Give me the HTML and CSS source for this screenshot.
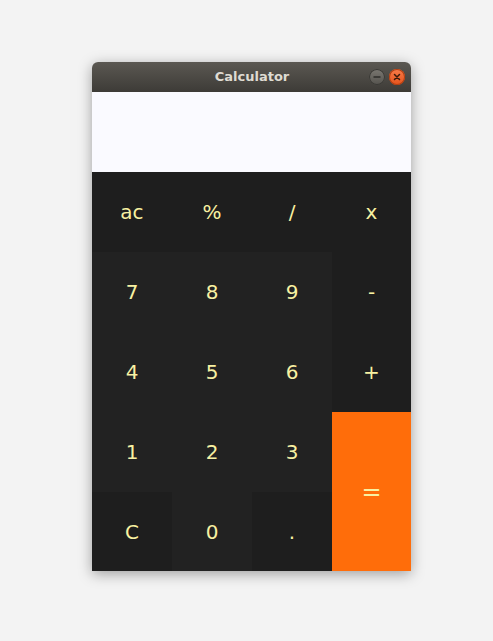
FILE: index.html
```html
<!DOCTYPE html>
<html>
<head>
<meta charset="utf-8">
<link rel="stylesheet" href="styles.css">
</head>
<body>
<div class="window">
  <div class="titlebar">
    <span class="title">Calculator</span>
    <div class="controls">
      <span class="ctl min"><svg width="16" height="16" viewBox="0 0 16 16"><line x1="4.5" y1="8" x2="11.5" y2="8" stroke="#2e2d2a" stroke-width="1.4"/></svg></span>
      <span class="ctl close"><svg width="16" height="16" viewBox="0 0 16 16"><path d="M5.5 5.5 L10.5 10.5 M10.5 5.5 L5.5 10.5" stroke="#3a1a0a" stroke-width="1.5" stroke-linecap="round"/></svg></span>
    </div>
  </div>
  <div class="display"></div>
  <div class="keys">
    <div class="key op">ac</div>
    <div class="key op">%</div>
    <div class="key op">/</div>
    <div class="key op">x</div>
    <div class="key num">7</div>
    <div class="key num">8</div>
    <div class="key num">9</div>
    <div class="key op">-</div>
    <div class="key num">4</div>
    <div class="key num">5</div>
    <div class="key num">6</div>
    <div class="key op">+</div>
    <div class="key num">1</div>
    <div class="key num">2</div>
    <div class="key num">3</div>
    <div class="key eq">=</div>
    <div class="key op">C</div>
    <div class="key num">0</div>
    <div class="key op">.</div>
  </div>
</div>
</body>
</html>
```

FILE: styles.css
```css
html, body {
  margin: 0;
  padding: 0;
}
body {
  background: #f3f3f3;
  width: 493px;
  height: 641px;
  overflow: hidden;
  font-family: "DejaVu Sans", sans-serif;
}
.window {
  margin: 62px 0 0 92px;
  width: 319px;
  border-radius: 6px 6px 0 0;
  box-shadow: 0 3px 14px rgba(0,0,0,0.35);
  overflow: hidden;
}
.titlebar {
  height: 30px;
  background: linear-gradient(#5b5852, #3d3b37);
  position: relative;
  display: flex;
  align-items: center;
  justify-content: center;
}
.title {
  color: #dfdbd2;
  font-weight: bold;
  font-size: 13px;
  margin-left: 1px;
  margin-top: -1px;
}
.controls {
  position: absolute;
  right: 6px;
  top: 7px;
  display: flex;
  gap: 4px;
}
.ctl {
  width: 16px;
  height: 16px;
  border-radius: 50%;
  display: block;
  box-sizing: border-box;
}
.ctl svg { display: block; }
.min {
  background: linear-gradient(#7a7771, #55534e);
  box-shadow: inset 0 0 0 1px #3a3935;
}
.close {
  background: linear-gradient(#f77c4a, #e5531c);
  box-shadow: inset 0 0 0 1px #b13e12;
}
.display {
  height: 80px;
  background: #fafaff;
}
.keys {
  display: grid;
  grid-template-columns: 80px 80px 80px 79px;
  grid-template-rows: 80px 80px 80px 80px 79px;
}
.key {
  display: flex;
  align-items: center;
  justify-content: center;
  color: #f8f1a2;
  font-size: 20px;
}
.num { background: #222222; }
.op { background: #1e1e1e; }
.eq {
  background: #ff6d0a;
  grid-row: span 2;
  font-size: 24px;
}
```
